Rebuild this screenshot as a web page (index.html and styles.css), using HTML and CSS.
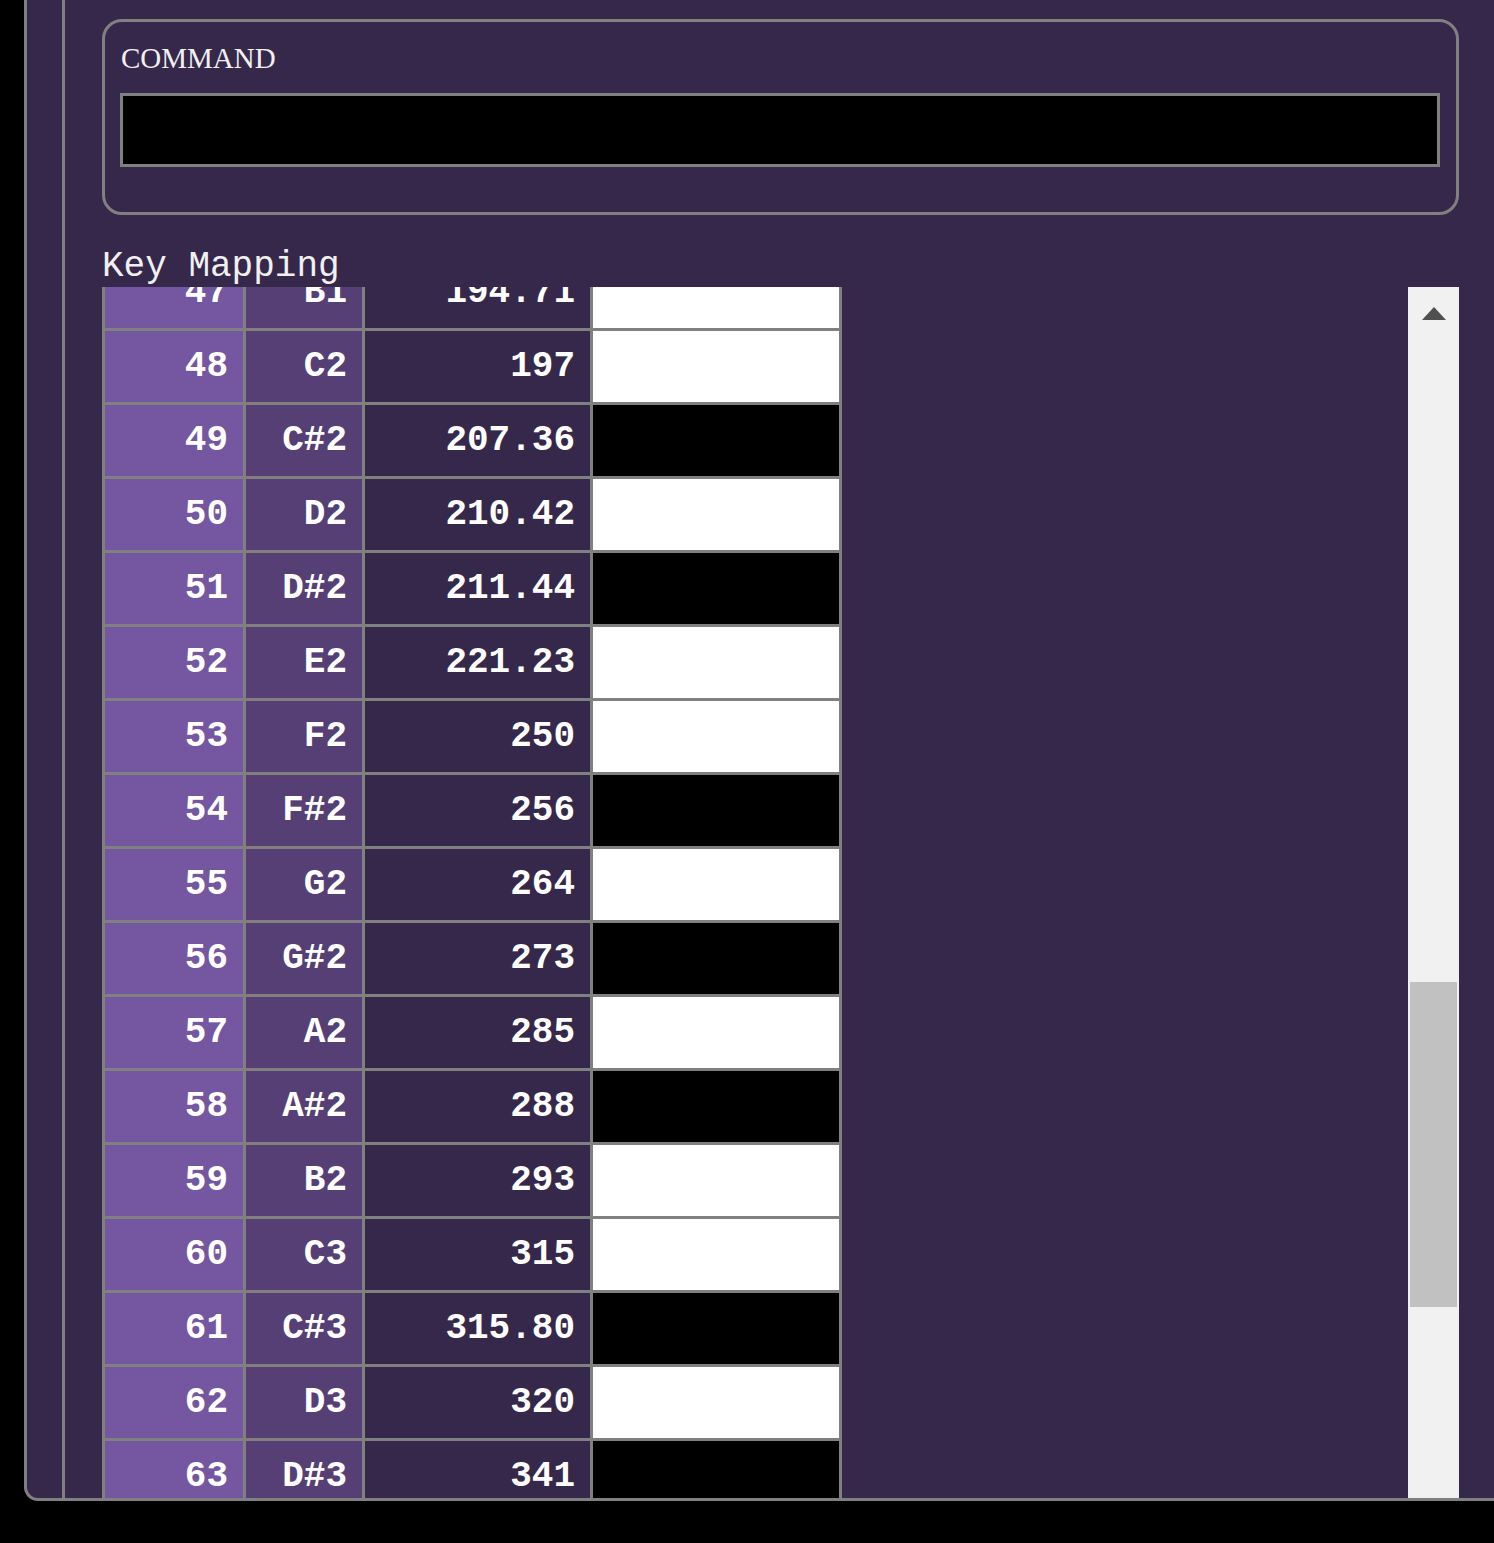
FILE: index.html
```html
<!DOCTYPE html>
<html lang="en">
<head>
<meta charset="utf-8">
<title>Key Mapping</title>
<link rel="stylesheet" href="styles.css">
</head>
<body>
<div class="frame">
  <div class="inner">
    <div class="content">
      <div class="command">
        <div class="command-label">COMMAND</div>
        <input class="command-input" type="text" aria-label="Command">
      </div>
      <div class="section-title">Key Mapping</div>
      <div class="mapping">
        <div class="table-viewport">
          <table class="keys">
            <tbody>
              <tr><td class="num">47</td><td class="note">B1</td><td class="freq">194.71</td><td class="key key-white"></td></tr>
              <tr><td class="num">48</td><td class="note">C2</td><td class="freq">197</td><td class="key key-white"></td></tr>
              <tr><td class="num">49</td><td class="note">C#2</td><td class="freq">207.36</td><td class="key key-black"></td></tr>
              <tr><td class="num">50</td><td class="note">D2</td><td class="freq">210.42</td><td class="key key-white"></td></tr>
              <tr><td class="num">51</td><td class="note">D#2</td><td class="freq">211.44</td><td class="key key-black"></td></tr>
              <tr><td class="num">52</td><td class="note">E2</td><td class="freq">221.23</td><td class="key key-white"></td></tr>
              <tr><td class="num">53</td><td class="note">F2</td><td class="freq">250</td><td class="key key-white"></td></tr>
              <tr><td class="num">54</td><td class="note">F#2</td><td class="freq">256</td><td class="key key-black"></td></tr>
              <tr><td class="num">55</td><td class="note">G2</td><td class="freq">264</td><td class="key key-white"></td></tr>
              <tr><td class="num">56</td><td class="note">G#2</td><td class="freq">273</td><td class="key key-black"></td></tr>
              <tr><td class="num">57</td><td class="note">A2</td><td class="freq">285</td><td class="key key-white"></td></tr>
              <tr><td class="num">58</td><td class="note">A#2</td><td class="freq">288</td><td class="key key-black"></td></tr>
              <tr><td class="num">59</td><td class="note">B2</td><td class="freq">293</td><td class="key key-white"></td></tr>
              <tr><td class="num">60</td><td class="note">C3</td><td class="freq">315</td><td class="key key-white"></td></tr>
              <tr><td class="num">61</td><td class="note">C#3</td><td class="freq">315.80</td><td class="key key-black"></td></tr>
              <tr><td class="num">62</td><td class="note">D3</td><td class="freq">320</td><td class="key key-white"></td></tr>
              <tr><td class="num">63</td><td class="note">D#3</td><td class="freq">341</td><td class="key key-black"></td></tr>
              <tr><td class="num">64</td><td class="note">E3</td><td class="freq">350</td><td class="key key-white"></td></tr>
            </tbody>
          </table>
        </div>
        <div class="scrollbar">
          <div class="scroll-up"><span class="scroll-arrow"></span></div>
          <div class="scroll-thumb"></div>
        </div>
      </div>
    </div>
  </div>
</div>
</body>
</html>
```

FILE: styles.css
```css
html, body {
  margin: 0;
  height: 100%;
  overflow: hidden;
  background: #000;
}

.frame {
  margin-left: 24px;
  width: 1490px;
  height: 1501px;
  box-sizing: border-box;
  border-left: 3px solid #808080;
  border-bottom: 3px solid #808080;
  border-bottom-left-radius: 14px;
  background: #36284a;
  overflow: hidden;
}

.inner {
  margin-left: 35px;
  height: 100%;
  box-sizing: border-box;
  border-left: 3px solid #808080;
  padding-left: 37px;
  padding-top: 19px;
}

.content {
  width: 1357px;
}

.command {
  border: 3px solid #808080;
  border-radius: 20px;
  padding: 20px 16px 45px 15px;
}

.command-label {
  font-family: "Liberation Serif", serif;
  font-size: 29px;
  line-height: 32px;
  color: #f0f0f0;
  padding-left: 1px;
}

.command-input {
  display: block;
  margin: 19px 0 0 0;
  width: 100%;
  height: 74px;
  box-sizing: border-box;
  border: 3px solid #808080;
  background: #000;
  padding: 0 8px;
  outline: none;
  color: #fff;
  font-family: "Liberation Mono", monospace;
  font-size: 30px;
}

.section-title {
  margin-top: 32px;
  font-family: "Liberation Mono", monospace;
  font-size: 36px;
  line-height: 40px;
  color: #f0f0f0;
  white-space: pre;
}

.mapping {
  display: flex;
  height: 1300px;
}

.table-viewport {
  flex: 1;
  overflow: hidden;
}

.keys {
  border-collapse: separate;
  border-spacing: 0;
  margin-top: -30px;
  border-left: 3px solid #808080;
  font-family: "Liberation Mono", monospace;
  font-weight: bold;
  font-size: 36px;
  color: #fff;
}

.keys td {
  padding: 0 15px 0 0;
  line-height: 71px;
  height: 71px;
  border-right: 3px solid #808080;
  border-bottom: 3px solid #808080;
  text-align: right;
  vertical-align: middle;
  white-space: nowrap;
}

.keys td.num {
  width: 123px;
  background: #7457a0;
}

.keys td.note {
  width: 101px;
  background: #553f75;
}

.keys td.freq {
  width: 210px;
  background: #36284a;
}

.keys td.key {
  width: 246px;
  padding: 0;
}

.key-white {
  background: #fff;
}

.key-black {
  background: #000;
}

.scrollbar {
  width: 51px;
  background: #f1f1f1;
  display: flex;
  flex-direction: column;
  align-items: center;
}

.scroll-up {
  width: 100%;
  height: 51px;
  display: flex;
  align-items: center;
  justify-content: center;
}

.scroll-arrow {
  width: 0;
  height: 0;
  margin-top: 2px;
  border-left: 12.5px solid transparent;
  border-right: 12.5px solid transparent;
  border-bottom: 13px solid #505050;
}

.scroll-thumb {
  margin-top: 644px;
  width: 47px;
  height: 325px;
  background: #c1c1c1;
}
```
